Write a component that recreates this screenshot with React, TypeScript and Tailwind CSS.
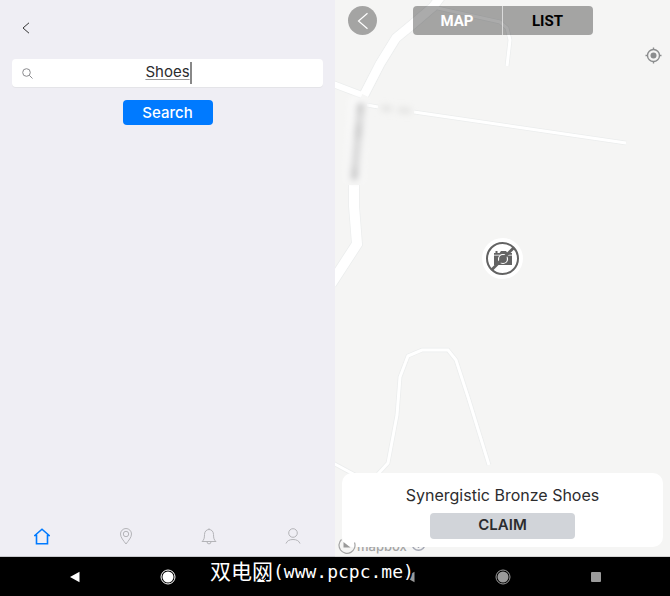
import React from 'react';
import type { ReactNode } from 'react';

interface SystemBarProps {
  color: string;
}

const tabs: { label: string; active?: boolean; icon: ReactNode }[] = [
  {
    label: 'Home',
    active: true,
    icon: <path d="M.8 7.500 8 1.200 15.200 7.500H13.500V15.700H2.500V7.500Z" strokeWidth="1.600" />,
  },
  {
    label: 'Nearby',
    icon: (
      <>
        <path d="M8 16C5.500 12.500 2.500 9.500 2.500 6A5.500 5.500 0 0 1 13.500 6C13.500 9.500 10.500 12.500 8 16Z" />
        <circle cx="8" cy="6" r="2.700" />
      </>
    ),
  },
  {
    label: 'Notifications',
    icon: (
      <>
        <path d="M1 13.500C3 12 3.500 10 3.500 6.500C3.500 3.500 5.500 1.500 8 1.500S12.500 3.500 12.500 6.500C12.500 10 13 12 15 13.500Z" />
        <path d="M6 13.700a2 2.200 0 0 0 4 0M8 .3v1.200" />
      </>
    ),
  },
  {
    label: 'Profile',
    icon: (
      <>
        <circle cx="8" cy="5" r="4.300" />
        <path d="M1 15.500C2 12.800 4.500 11.500 8 11.500S14 12.800 15 15.500" />
      </>
    ),
  },
];

function SystemBar({ color }: SystemBarProps) {
  return (
    <div className={`grid h-[39px] grid-cols-3 bg-black px-7 ${color}`}>
      <button type="button" aria-label="Back" className="flex items-center justify-center">
        <svg width="12" height="12" viewBox="0 0 12 12" fill="currentColor">
          <path d="M1 6 10.500.8V11.200Z" />
        </svg>
      </button>
      <button type="button" aria-label="Home" className="flex items-center justify-center">
        <svg width="16" height="16" viewBox="0 0 16 16" fill="currentColor">
          <circle cx="8" cy="8" r="7" fill="none" stroke="currentColor" />
          <circle cx="8" cy="8" r="5.500" />
        </svg>
      </button>
      <button type="button" aria-label="Recent apps" className="flex items-center justify-center">
        <svg width="10" height="10" viewBox="0 0 10 10" fill="currentColor">
          <rect width="10" height="10" rx="1" />
        </svg>
      </button>
    </div>
  );
}

function SearchScreen() {
  return (
    <section className="flex flex-col bg-[#efeef4]">
      <div className="flex flex-1 flex-col border-b border-[#c8c8cc]">
        <header className="mb-1 flex h-[55px] items-center px-5">
          <button type="button" aria-label="Back">
            <svg width="12" height="12" viewBox="0 0 12 12" fill="none" stroke="#333">
              <path d="M9 .8 3 6 9 11.200" />
            </svg>
          </button>
        </header>

        <div className="flex flex-1 flex-col items-center px-3">
          <div className="relative w-full">
            <svg className="absolute left-[10px] top-[9px]" width="11" height="11" viewBox="0 0 11 11" fill="none" stroke="#8a8a8e">
              <circle cx="4.500" cy="4.500" r="3.800" />
              <path d="M7.300 7.300 10.500 10.500" />
            </svg>
            <input
              type="text"
              aria-label="Search"
              defaultValue="Shoes"
              className="block h-7 w-full rounded-[4px] bg-white pb-1 text-center font-['Inter',sans-serif] text-[15px] text-[#2c2c2e] underline decoration-[#999] decoration-1 underline-offset-2 shadow-[0_1px_0_#e4e4e8] outline-none"
            />
            <span className="absolute left-1/2 top-[3px] ml-[22px] h-[22px] w-[2px] bg-[#888]" />
          </div>
          <button
            type="button"
            className="mt-[13px] h-[25px] w-[90px] rounded-[4px] bg-[#007aff] font-['Inter',sans-serif] text-[15px] font-medium leading-6 text-white"
          >
            Search
          </button>
        </div>

        <nav className="grid h-10 grid-cols-4">
          {tabs.map((tab) => (
            <a
              key={tab.label}
              href="#"
              aria-label={tab.label}
              className={`flex items-center justify-center ${tab.active ? 'text-[#007aff]' : 'text-[#b4b4b8]'}`}
            >
              <svg width="16" height="17" viewBox="0 0 16 17" fill="none" stroke="currentColor">
                {tab.icon}
              </svg>
            </a>
          ))}
        </nav>
      </div>
      <SystemBar color="text-white" />
    </section>
  );
}

function RoadMap() {
  const roads = [
    { d: 'M107-5 98 7 78 24 61 38 45 64 29 95', width: 9 },
    { d: 'M-2 84 27 95', width: 6 },
    { d: 'M19 185 19 206 22 244-4 284', width: 10 },
    { d: 'M98 7 165 22 172 28 175 40 172 66', width: 3 },
    { d: 'M32 105 43 107', width: 3 },
    { d: 'M79 112 291 143', width: 3 },
    { d: 'M154 465 134 400 121 360 113 350H87L73 356 65 377 62 415 53 463 43 474', width: 3 },
    { d: 'M-2 463 22 476', width: 3 },
  ];

  return (
    <svg className="absolute inset-0 h-full w-full" viewBox="0 0 335 557" preserveAspectRatio="xMinYMin slice" fill="none">
      <defs>
        <filter id="soften" x="-100%" y="-100%" width="300%" height="300%">
          <feGaussianBlur stdDeviation="3" />
        </filter>
      </defs>
      {roads.map((road) => (
        <path key={road.d} d={road.d} stroke="#ebeded" strokeWidth={road.width + 1.5} />
      ))}
      {roads.map((road) => (
        <path key={road.d} d={road.d} stroke="#fff" strokeWidth={road.width} />
      ))}
      {/* street labels */}
      <g filter="url(#soften)">
        <path d="M24 98 19 182" stroke="#fbfbfb" strokeWidth="17" />
        <path d="M26 103 19 180" stroke="#dadada" strokeWidth="9" />
        <path d="M26 103 25 113M24 125 23 138M20 168 19 180" stroke="#cfcfcf" strokeWidth="7" />
        <path d="M46 108 57 109M63 110 76 111" stroke="#e4e4e3" strokeWidth="6" />
      </g>
    </svg>
  );
}

function MapScreen() {
  return (
    <section className="flex flex-col bg-[#f5f5f4]">
      <div className="relative flex flex-1 flex-col overflow-hidden border-b border-[#d5d5d5]">
        <RoadMap />

        <header className="relative grid grid-cols-[1fr_180px_1fr] items-center px-3 pt-[6px]">
          <button type="button" aria-label="Back" className="ml-px flex size-[29px] items-center justify-center rounded-full bg-black/33">
            <svg width="12" height="18" viewBox="0 0 12 18" fill="none" stroke="#fff" strokeWidth="1.200">
              <path d="M10.500 1.200 1.500 9 10.500 16.800" />
            </svg>
          </button>
          <div className="grid h-[29px] grid-cols-2 overflow-hidden rounded-[4px] bg-black/33 font-['Roboto',sans-serif] text-[15px] font-bold">
            <button type="button" className="border-r border-white/60 pt-[2px] text-white">MAP</button>
            <button type="button" className="pt-[2px] text-black">LIST</button>
          </div>
        </header>
        <button type="button" aria-label="Locate me" className="relative mr-2 mt-3 self-end">
          <svg width="17" height="17" viewBox="0 0 17 17" fill="none" stroke="#8b8d8e" strokeWidth="1.400">
            <circle cx="8.500" cy="8.500" r="6" />
            <circle cx="8.500" cy="8.500" r="3" fill="#8b8d8e" stroke="none" />
            <path d="M8.500.5v2.500M8.500 14v2.500M.5 8.500H3M14 8.500h2.500" />
          </svg>
        </button>

        <button type="button" aria-label="Synergistic Bronze Shoes" className="absolute left-1/2 top-[238px] -ml-[21px] size-[41px]">
          <svg width="41" height="41" viewBox="0 0 41 41" fill="none">
            <circle cx="20.500" cy="20.500" r="20.500" fill="#fff" />
            <path d="M12 15H17.500L19 13H24L25.500 15H30V27H12ZM13.500 13H15.500V15H13.500Z" fill="#636363" />
            <path d="M12 17.200H30" stroke="#fff" strokeWidth=".8" />
            <circle cx="21" cy="21" r="4.500" fill="#636363" stroke="#fff" strokeWidth="1.200" />
            <path d="M9.500 32 32 9.500" stroke="#636363" strokeWidth="2.800" />
            <circle cx="20.500" cy="20.500" r="15.500" stroke="#636363" strokeWidth="2" />
          </svg>
        </button>

        <div className="absolute bottom-0 left-[22px] flex items-center gap-1 text-[#a3a3a3]">
          <span className="font-['Inter',sans-serif] text-[13px] font-medium leading-[18px]">mapbox</span>
          <button type="button" aria-label="About this map">
            <svg width="15" height="20" viewBox="0 0 15 20" fill="none" stroke="#a5a8b4" strokeWidth="1.500">
              <circle cx="7.500" cy="8" r="6.300" />
              <path d="M7.500 7v5" />
            </svg>
          </button>
        </div>

        <article className="relative mx-[7px] mb-[9px] mt-auto flex h-[74px] flex-col items-center rounded-[10px] bg-white font-['Inter',sans-serif] text-[#2c2c2e]">
          <h2 className="mt-[10px] text-base leading-6">Synergistic Bronze Shoes</h2>
          <button type="button" className="mt-[6px] h-[26px] w-[145px] rounded-[4px] bg-[#d1d4d9] pb-[2px] text-[15px] font-semibold leading-6">
            CLAIM
          </button>
        </article>

        <svg className="absolute bottom-[2px] left-[3px]" width="18" height="18" viewBox="0 0 18 18" fill="none">
          <path d="M3.500 3.500A8 8 0 1 0 16.500 6.500" stroke="#a3a3a3" strokeWidth="1.200" />
          <path d="M5.500 6 12.500 11.500H5.500Z" fill="#999" />
        </svg>
      </div>
      <SystemBar color="text-[#9b9b9b]" />
    </section>
  );
}

export default function App() {
  return (
    <main className="relative grid min-h-screen grid-cols-2">
      <SearchScreen />
      <MapScreen />
      <p className="absolute bottom-3 left-[210px] flex items-end whitespace-nowrap text-white [text-shadow:1px_1px_0_#000,-1px_-1px_0_#000,1px_-1px_0_#000,-1px_1px_0_#000,2px_0_0_#000,-2px_0_0_#000]">
        <span className="pb-[2px] font-['Noto_Sans_CJK_SC',sans-serif] text-[21px] leading-6">双电网</span>
        <span className="font-['DejaVu_Sans_Mono',monospace] text-lg leading-6">(www.pcpc.me)</span>
      </p>
    </main>
  );
}
